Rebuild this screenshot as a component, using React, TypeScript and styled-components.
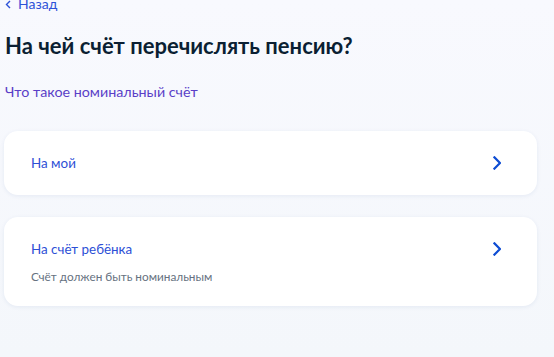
import styled, { createGlobalStyle } from "styled-components";

const GlobalStyle = createGlobalStyle`
  html, body {
    margin: 0;
    padding: 0;
    background: #f6f8fc;
  }
  body {
    font-family: Lato, "Liberation Sans", sans-serif;
    color: #0b1f33;
  }
`;

const Page = styled.div`
  width: 554px;
  height: 357px;
  overflow: hidden;
  background: linear-gradient(180deg, #f8f9fe 0%, #f4f7fb 100%);
  padding: 0 17px 0 4px;
  box-sizing: border-box;
  display: flex;
  flex-direction: column;
`;

const Back = styled.a`
  display: flex;
  align-items: center;
  gap: 7px;
  margin-top: -6px;
  padding-left: 1px;
  font-size: 14px;
  line-height: 20px;
  color: #2d52d8;
  text-decoration: none;
`;

const Title = styled.h1`
  margin: 18px 0 0 1px;
  font-size: 22px;
  line-height: 28px;
  font-weight: 700;
  color: #0b1f33;
`;

const InfoLink = styled.a`
  margin: 22px 0 0 1px;
  font-size: 14.3px;
  line-height: 20px;
  color: #5a3fc7;
  text-decoration: none;
`;

const Options = styled.div`
  margin-top: 29px;
  display: flex;
  flex-direction: column;
  gap: 22px;
`;

const Card = styled.button<{ $top?: boolean }>`
  all: unset;
  box-sizing: border-box;
  display: flex;
  align-items: ${({ $top }) => ($top ? "flex-start" : "center")};
  justify-content: space-between;
  width: 100%;
  min-height: 64px;
  padding: ${({ $top }) => ($top ? "22px 36px 21px 27px" : "0 36px 0 27px")};
  background: #ffffff;
  border-radius: 14px;
  box-shadow: 0 1px 4px rgba(30, 60, 140, 0.08);
  cursor: pointer;
`;

const CardText = styled.div`
  display: flex;
  flex-direction: column;
  gap: 10px;
`;

const CardTitle = styled.span`
  font-size: 13.4px;
  line-height: 20px;
  color: #2d4fd6;
`;

const CardNote = styled.span`
  font-size: 11.8px;
  line-height: 16px;
  color: #66727f;
`;

const Chevron = ({ size = 14 }: { size?: number }) => (
  <svg width={size * 0.6} height={size} viewBox="0 0 9 15" fill="none">
    <path d="M1.5 1.5L7.5 7.5L1.5 13.5" stroke="#0d4cd3" strokeWidth="2.4" strokeLinecap="square" />
  </svg>
);

const BackArrow = () => (
  <svg width="6" height="9" viewBox="0 0 6 9" fill="none">
    <path d="M5 1L1.5 4.5L5 8" stroke="#2d52d8" strokeWidth="1.4" />
  </svg>
);

const ChevronWrap = styled.span`
  display: flex;
  align-items: center;
  height: 20px;
`;

const App = () => {
  return (
    <>
      <GlobalStyle />
      <Page>
        <Back href="#">
          <BackArrow />
          Назад
        </Back>
        <Title>На чей счёт перечислять пенсию?</Title>
        <InfoLink href="#">Что такое номинальный счёт</InfoLink>
        <Options>
          <Card>
            <CardTitle>На мой</CardTitle>
            <ChevronWrap>
              <Chevron />
            </ChevronWrap>
          </Card>
          <Card $top>
            <CardText>
              <CardTitle>На счёт ребёнка</CardTitle>
              <CardNote>Счёт должен быть номинальным</CardNote>
            </CardText>
            <ChevronWrap>
              <Chevron />
            </ChevronWrap>
          </Card>
        </Options>
      </Page>
    </>
  );
};

export default App;
